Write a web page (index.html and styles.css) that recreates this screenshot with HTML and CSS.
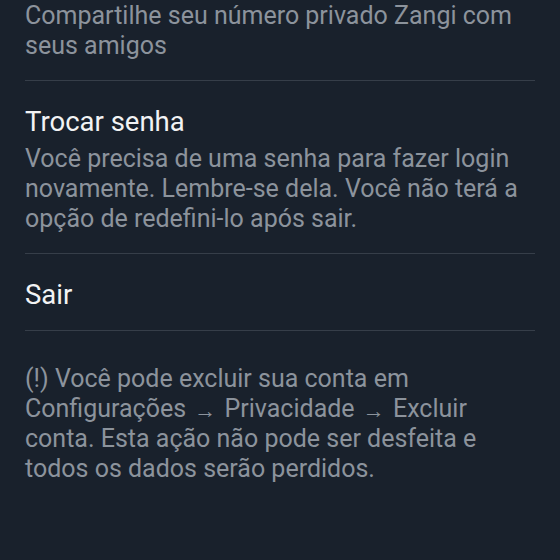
FILE: index.html
```html
<!DOCTYPE html>
<html lang="pt">
<head>
  <meta charset="UTF-8">
  <meta name="viewport" content="width=device-width, initial-scale=1.0">
  <title>Conta</title>
  <link rel="stylesheet" href="styles.css">
</head>
<body>
  <div class="list">
    <!-- Share number (title scrolled off) -->
    <div class="item item-top">
      <p class="desc">Compartilhe seu número privado Zangi com seus amigos</p>
    </div>

    <!-- Change password -->
    <div class="item">
      <h2 class="title">Trocar senha</h2>
      <p class="desc">Você precisa de uma senha para fazer login novamente. Lembre-se dela. Você não terá a opção de redefini-lo após sair.</p>
    </div>

    <!-- Logout -->
    <div class="item">
      <h2 class="title">Sair</h2>
    </div>
  </div>

  <p class="note">(!) Você pode excluir sua conta em Configurações <span class="arrow">→</span> Privacidade <span class="arrow">→</span> Excluir conta. Esta ação não pode ser desfeita e todos os dados serão perdidos.</p>
</body>
</html>
```

FILE: styles.css
```css
body {
  margin: 0;
  padding: 0 25px;
  background-color: #19212c;
  font-family: Roboto, 'Noto Sans', sans-serif;
  color: #8c939c;
}
.list {
  display: flex;
  flex-direction: column;
}
.item {
  padding: 25px 0 19px;
  border-bottom: 1px solid #363e49;
}
.item-top {
  padding-top: 1px;
}
.title {
  margin: 0;
  font-size: 27.5px;
  font-weight: normal;
  line-height: 32px;
  color: #f2f3f4;
}
.title + .desc {
  margin-top: 6px;
}
.desc {
  margin: 0;
  font-size: 25px;
  line-height: 30px;
}
.note {
  margin: 33px 0 0;
  font-size: 25px;
  line-height: 30px;
}
.arrow {
  font-size: 22px;
  line-height: 1;
  vertical-align: -1px;
  padding: 0 2px;
}
```
